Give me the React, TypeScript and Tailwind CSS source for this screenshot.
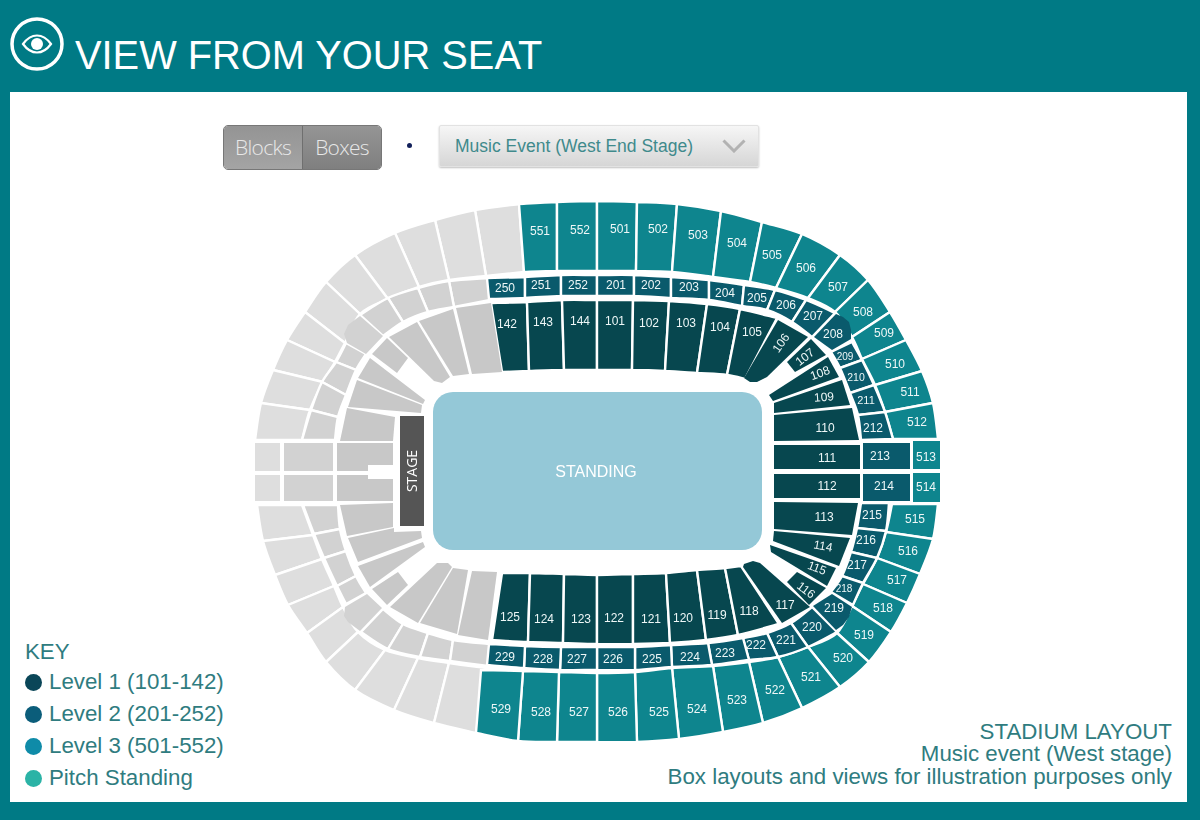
type Pt = number[]

const LEVEL1 = '#07474f'
const LEVEL2 = '#0a5a6c'
const LEVEL3 = '#0e858e'
const GREY3 = '#dedede'
const GREY2 = '#d2d2d2'
const GREY1 = '#c8c8c8'

// a divider is [outerX, outerY, innerX, innerY]; a ring draws the seats between neighbouring dividers
const level3Top = [
  [519, 204, 524, 272], [557, 202, 557, 271], [597, 201, 597, 271], [637, 202, 636, 271], [677, 204, 672, 272],
  [721, 211, 713, 277], [762, 222, 750, 282], [802, 234, 776, 288], [840, 255, 808, 298], [868, 280, 835, 312],
  [890, 312, 852, 337], [906, 340, 862, 359], [922, 371, 875, 385], [933, 403, 885, 412], [938, 439, 893, 439],
]
const level3Bottom = [
  [938, 504, 892, 504], [933, 539, 886, 532], [920, 574, 877, 558], [907, 603, 863, 584], [891, 632, 852, 606],
  [869, 662, 837, 633], [840, 687, 808, 647], [802, 708, 778, 657], [763, 723, 749, 662], [723, 732, 713, 666],
  [679, 739, 672, 668], [637, 742, 635, 672], [597, 742, 597, 673], [557, 742, 559, 672], [518, 741, 523, 671], [476, 733, 481, 670],
]
const level2Top = [
  [487, 278, 489, 299], [525, 277, 525, 298], [561, 275, 561, 296], [597, 275, 597, 296], [634, 275, 634, 296],
  [671, 277, 671, 298], [709, 280, 709, 300], [744, 285, 742, 306], [775, 290, 767, 310], [806, 300, 792, 322], [835, 313, 812, 337],
]
const level2Side = [[852, 342, 831, 352], [862, 360, 840, 368], [874, 385, 850, 393], [885, 412, 858, 415], [893, 439, 861, 440]]
const level2LowSide = [[889, 503, 861, 503], [886, 531, 857, 528], [877, 558, 851, 552], [863, 583, 842, 576], [853, 605, 831, 592]]
const level2Bottom = [
  [837, 632, 812, 607], [808, 647, 791, 623], [778, 657, 767, 633], [749, 660, 743, 638], [712, 665, 708, 643], [672, 667, 671, 645],
  [635, 670, 635, 647], [597, 670, 597, 647], [560, 670, 561, 647], [524, 668, 525, 646], [487, 665, 489, 644],
]
const level1Top = [
  [491, 303, 502, 372], [527, 302, 529, 371], [562, 300, 564, 370], [597, 300, 597, 370], [633, 300, 632, 370],
  [669, 301, 665, 371], [707, 304, 697, 373], [740, 309, 727, 375], [777, 318, 745, 379],
]
const level1Bottom = [
  [492, 640, 502, 573], [528, 642, 530, 573], [563, 643, 564, 574], [597, 644, 597, 575], [633, 644, 633, 574],
  [670, 643, 666, 573], [706, 640, 697, 570], [738, 635, 725, 568], [779, 624, 741, 566],
]
const greyTop = [
  [519, 204, 524, 272], [475, 210, 486, 276], [435, 220, 449, 280], [395, 233, 419, 287], [355, 255, 388, 299], [326, 282, 360, 314],
  [305, 312, 345, 343], [287, 340, 335, 362], [273, 370, 323, 382], [261, 403, 310, 410], [255, 440, 302, 440],
]
const greyBottom = [
  [257, 505, 302, 505], [263, 541, 313, 535], [275, 575, 322, 559], [288, 605, 334, 586], [307, 633, 343, 607], [326, 662, 358, 632],
  [355, 690, 385, 650], [394, 710, 418, 658], [434, 723, 449, 663], [476, 733, 486, 668],
]
const greyMidTop = [[488, 278, 490, 300], [449, 281, 454, 307], [418, 288, 428, 312], [388, 298, 403, 322], [360, 315, 383, 336]]
const greyMidSide = [[346, 343, 366, 354], [336, 362, 356, 370], [322, 382, 346, 395], [311, 410, 338, 417], [302, 440, 335, 440]]
const greyMidLowSide = [[303, 505, 338, 505], [314, 534, 340, 529], [324, 558, 346, 551], [337, 586, 356, 576], [346, 604, 366, 593]]
const greyMidBottom = [[361, 632, 383, 609], [388, 649, 403, 624], [420, 657, 428, 633], [450, 661, 453, 640], [488, 666, 490, 644]]

// loose pieces: the corner blocks, the short blocks by the pitch and the straight blocks at the ends
const polys: [string, number[]][] = [
  [LEVEL3, [913, 441, 940, 441, 940, 469, 913, 469]],
  [LEVEL3, [913, 473, 940, 473, 940, 502, 913, 502]],
  [LEVEL2, [863, 443, 910, 443, 910, 469, 863, 469]],
  [LEVEL2, [863, 474, 910, 474, 910, 501, 863, 501]],
  [LEVEL2, [836, 314, 843, 317, 849, 322, 851, 330, 851, 339, 832, 350, 814, 337]],
  [LEVEL2, [832, 594, 852, 607, 849, 617, 843, 625, 836, 630, 813, 606]],
  [LEVEL1, [778, 320, 808, 337, 767, 377, 757, 382, 750, 382, 744, 378]],
  [LEVEL1, [811, 339, 826, 355, 795, 372, 787, 362]],
  [LEVEL1, [828, 357, 839, 377, 773, 401, 769, 395]],
  [LEVEL1, [842, 380, 850, 405, 774, 413, 774, 403]],
  [LEVEL1, [852, 408, 859, 440, 774, 441, 774, 415]],
  [LEVEL1, [774, 445, 860, 445, 860, 469, 774, 469]],
  [LEVEL1, [774, 474, 860, 474, 860, 498, 774, 498]],
  [LEVEL1, [774, 502, 858, 503, 852, 535, 774, 529]],
  [LEVEL1, [774, 531, 850, 538, 839, 566, 773, 541]],
  [LEVEL1, [770, 545, 836, 568, 827, 586, 771, 552]],
  [LEVEL1, [797, 572, 826, 588, 809, 605, 787, 582]],
  [LEVEL1, [744, 564, 753, 561, 760, 563, 810, 607, 782, 623, 743, 567]],
  [GREY2, [360, 316, 348, 325, 344, 334, 347, 343, 366, 354, 383, 336]],
  [GREY2, [345, 607, 367, 594, 382, 608, 360, 631, 348, 622, 344, 616]],
  [GREY3, [255, 443, 280, 443, 280, 471, 255, 471]],
  [GREY3, [255, 475, 280, 475, 280, 501, 255, 501]],
  [GREY2, [284, 443, 333, 443, 333, 471, 284, 471]],
  [GREY2, [284, 475, 333, 475, 333, 501, 284, 501]],
  [GREY1, [337, 443, 393, 443, 393, 465, 368, 465, 368, 471, 337, 471]],
  [GREY1, [337, 475, 368, 475, 368, 479, 393, 479, 393, 501, 337, 501]],
  [GREY1, [491, 303, 502, 372, 472, 374, 456, 308]],
  [GREY1, [453, 309, 469, 374, 453, 376, 419, 321]],
  [GREY1, [417, 322, 450, 377, 442, 383, 434, 381, 389, 337]],
  [GREY1, [387, 338, 408, 358, 397, 373, 372, 354]],
  [GREY1, [370, 358, 425, 400, 423, 404, 358, 378]],
  [GREY1, [357, 380, 422, 405, 421, 413, 348, 407]],
  [GREY1, [347, 408, 395, 417, 393, 441, 340, 441]],
  [GREY1, [340, 505, 393, 503, 393, 527, 347, 536]],
  [GREY1, [348, 538, 394, 528, 394, 532, 421, 531, 422, 538, 358, 562]],
  [GREY1, [358, 566, 423, 542, 425, 547, 370, 587]],
  [GREY1, [372, 589, 398, 572, 408, 585, 387, 605]],
  [GREY1, [390, 607, 437, 563, 448, 563, 452, 567, 418, 623]],
  [GREY1, [420, 623, 453, 568, 468, 570, 457, 634]],
  [GREY1, [458, 635, 472, 571, 497, 572, 488, 640]],
]

const labels: [string, number, number, number?, number?][] = [
  ['551', 540, 231], ['552', 580, 230], ['501', 620, 229], ['502', 658, 229], ['503', 698, 235], ['504', 737, 243],
  ['505', 772, 255], ['506', 806, 268], ['507', 838, 287], ['508', 863, 312], ['509', 884, 333], ['510', 895, 364],
  ['511', 910, 392], ['512', 917, 422], ['513', 926, 457], ['514', 926, 487], ['515', 915, 519], ['516', 908, 551],
  ['517', 897, 580], ['518', 883, 608], ['519', 864, 635], ['520', 843, 658], ['521', 811, 677], ['522', 775, 690],
  ['523', 737, 700], ['524', 697, 709], ['525', 659, 712], ['526', 618, 712], ['527', 579, 712], ['528', 541, 712], ['529', 501, 709],
  ['250', 505, 288], ['251', 541, 285], ['252', 578, 285], ['201', 616, 285], ['202', 651, 285], ['203', 689, 287],
  ['204', 725, 293], ['205', 757, 298], ['206', 786, 305], ['207', 813, 316], ['208', 833, 334], ['209', 845, 356, 0, 10],
  ['210', 856, 377, 0, 10.5], ['211', 866, 400, 0, 11], ['212', 873, 428], ['213', 880, 456], ['214', 884, 486], ['215', 872, 515],
  ['216', 866, 540], ['217', 857, 565], ['218', 844, 588, 0, 10], ['219', 834, 608], ['220', 812, 627], ['221', 786, 640],
  ['222', 756, 645], ['223', 725, 653], ['224', 690, 657], ['225', 652, 659], ['226', 613, 659], ['227', 577, 659], ['228', 543, 659], ['229', 505, 657],
  ['142', 507, 324], ['143', 543, 322], ['144', 580, 321], ['101', 615, 321], ['102', 649, 323], ['103', 686, 323], ['104', 720, 327],
  ['105', 752, 332], ['106', 781, 343, -55], ['107', 805, 357, -38], ['108', 820, 373, -20], ['109', 824, 397, -4], ['110', 825, 428],
  ['111', 827, 458], ['112', 827, 486], ['113', 824, 517], ['114', 823, 546, 10], ['115', 817, 568, 20], ['116', 806, 590, 37],
  ['117', 785, 605], ['118', 749, 611], ['119', 717, 615], ['120', 683, 618], ['121', 651, 619], ['122', 614, 618], ['123', 581, 619],
  ['124', 544, 619], ['125', 510, 617],
]

const keyRows = [
  { color: 'bg-[#0a4658]', text: 'Level 1 (101-142)' },
  { color: 'bg-[#0b5d7a]', text: 'Level 2 (201-252)' },
  { color: 'bg-[#0f8ba8]', text: 'Level 3 (501-552)' },
  { color: 'bg-[#2bb3a6]', text: 'Pitch Standing' },
]

// catmull-rom through a polyline, from point i to point i+1
function curve(p: Pt[], i: number, dir: 1 | -1) {
  const a = p[Math.max(i - 1, 0)], b = p[i], c = p[i + 1], d = p[Math.min(i + 2, p.length - 1)]
  const c1 = [b[0] + (c[0] - a[0]) / 6, b[1] + (c[1] - a[1]) / 6]
  const c2 = [c[0] - (d[0] - b[0]) / 6, c[1] - (d[1] - b[1]) / 6]
  return dir === 1
    ? `C${c1[0]} ${c1[1]} ${c2[0]} ${c2[1]} ${c[0]} ${c[1]}`
    : `C${c2[0]} ${c2[1]} ${c1[0]} ${c1[1]} ${b[0]} ${b[1]}`
}

function Ring({ d, fill }: { d: number[][]; fill: string }) {
  const outer = d.map(r => [r[0], r[1]])
  const inner = d.map(r => [r[2], r[3]])
  return <>
    {d.slice(0, -1).map((r, i) => (
      <path key={i} fill={fill} stroke="#fff" strokeWidth={2.4}
        d={`M${r[0]} ${r[1]}${curve(outer, i, 1)}L${d[i + 1][2]} ${d[i + 1][3]}${curve(inner, i, -1)}Z`} />
    ))}
  </>
}

function StadiumMap() {
  return (
    <svg viewBox="10 92 1177 710" className="absolute inset-0 h-full w-full blur-[0.5px]" style={{ fontFamily: '"Liberation Sans", Arial, sans-serif' }}>
      <Ring d={greyTop} fill={GREY3} />
      <Ring d={greyBottom} fill={GREY3} />
      <Ring d={greyMidTop} fill={GREY2} />
      <Ring d={greyMidSide} fill={GREY2} />
      <Ring d={greyMidLowSide} fill={GREY2} />
      <Ring d={greyMidBottom} fill={GREY2} />
      <Ring d={level3Top} fill={LEVEL3} />
      <Ring d={level3Bottom} fill={LEVEL3} />
      <Ring d={level2Top} fill={LEVEL2} />
      <Ring d={level2Side} fill={LEVEL2} />
      <Ring d={level2LowSide} fill={LEVEL2} />
      <Ring d={level2Bottom} fill={LEVEL2} />
      <Ring d={level1Top} fill={LEVEL1} />
      <Ring d={level1Bottom} fill={LEVEL1} />
      {polys.map(([fill, p], i) => <polygon key={i} fill={fill} points={p.join(' ')} />)}

      <rect x={433} y={392} width={329} height={158} rx={20} fill="#94c8d7" />
      <text x={596} y={471} fill="#fff" fontSize={16} textAnchor="middle" dominantBaseline="central">STANDING</text>
      <rect x={400} y={416} width={24} height={110} fill="#555555" />
      <text transform="translate(411 471) rotate(-90)" fill="#fff" fontSize={14} textAnchor="middle" dominantBaseline="central" style={{ fontFamily: '"Open Sans", sans-serif' }}>STAGE</text>

      {labels.map(([t, x, y, rot, size]) => (
        <text key={t} transform={`translate(${x} ${y}) rotate(${rot ?? 0})`} fill="#eef7f7" fontSize={size ?? 12}
          textAnchor="middle" dominantBaseline="central">{t}</text>
      ))}
    </svg>
  )
}

export default function App() {
  return (
    <div className="flex h-[820px] flex-col bg-[#007a85] font-['Liberation_Sans',Arial,sans-serif]">
      <header className="flex h-[92px] shrink-0 items-center pl-[10px] pr-4">
        <svg viewBox="0 0 54 54" className="mb-[4px] h-[54px] w-[54px] shrink-0">
          <circle cx="27" cy="27" r="25" fill="none" stroke="#fff" strokeWidth="3.5" />
          <path d="M13 27c4-5.500 9-8.500 14-8.500S37 21.500 41 27c-4 5.500-9 8.500-14 8.500S17 32.500 13 27Z" fill="none" stroke="#fff" strokeWidth="2.2" />
          <circle cx="27" cy="27" r="6" fill="#fff" />
        </svg>
        <h1 className="ml-[11px] mt-[20px] text-[39.8px] leading-none text-white">VIEW FROM YOUR SEAT</h1>
      </header>

      <main className="relative mb-[18px] ml-[10px] mr-[13px] flex flex-1 flex-col bg-white">
        <StadiumMap />
        <div className="relative flex items-start pl-[213px] pt-[33px]">
          <div className="flex h-[45px] w-[159px] overflow-hidden rounded-[5px] border border-[#777] text-[21px] font-light text-[#e8e8e8] font-['Open_Sans',sans-serif]">
            <div className="flex w-[79px] items-center justify-center border-r border-[#6f6f6f] bg-gradient-to-b from-[#949494] to-[#a4a4a4] tracking-[-0.7px]">Blocks</div>
            <div className="flex flex-1 items-center justify-center bg-gradient-to-b from-[#959595] to-[#7f7f7f] tracking-[-0.7px]">Boxes</div>
          </div>
          <div className="ml-[25px] mt-[18px] h-[5px] w-[5px] rounded-full bg-[#12205a]" />
          <div className="ml-[27px] flex h-[42px] w-[320px] items-center justify-between rounded-[2px] border border-[#e2e2e2] bg-gradient-to-b from-[#f6f6f6] to-[#d6d6d6] pl-[15px] pr-[12px] text-[17.5px] text-[#3f8a8c] shadow-[0_1px_2px_rgba(0,0,0,0.25)]">
            <span>Music Event (West End Stage)</span>
            <svg viewBox="0 0 24 14" className="h-[14px] w-[24px]" fill="none" stroke="#b2b2b2" strokeWidth="3"><path d="M1.500 1.500 12 12 22.500 1.500" /></svg>
          </div>
        </div>

        <div className="relative mt-auto flex items-end justify-between pb-[8px] pl-[15px] pr-[15px] text-[22.3px] text-[#2f7c80]">
          <div>
            <div className="leading-[28px]">KEY</div>
            {keyRows.map(row => (
              <div key={row.text} className="flex h-[32px] items-center gap-[7px]">
                <span className={`h-[17px] w-[17px] rounded-full ${row.color}`} />
                <span>{row.text}</span>
              </div>
            ))}
          </div>
          <div className="mb-[6px] text-right leading-[22.5px]">
            <div>STADIUM LAYOUT</div>
            <div>Music event (West stage)</div>
            <div>Box layouts and views for illustration purposes only</div>
          </div>
        </div>
      </main>
    </div>
  )
}
